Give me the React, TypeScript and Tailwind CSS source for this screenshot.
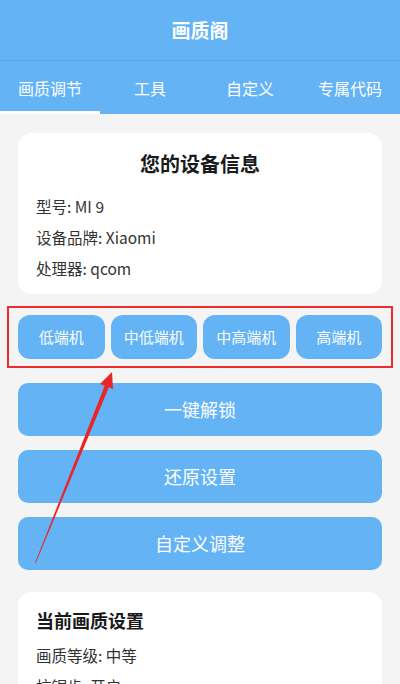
import React from "react";

const tabs = ["画质调节", "工具", "自定义", "专属代码"];
const levels = ["低端机", "中低端机", "中高端机", "高端机"];
const actions = ["一键解锁", "还原设置", "自定义调整"];

function Arrow() {
  // 红色标注箭头，盖在按钮上
  return (
    <svg className="absolute left-0 top-0 pointer-events-none" width="400" height="684" viewBox="0 0 400 684">
      <polygon points="35,563 35.8,563 109,387 105,385" fill="#e8262a" />
      <polygon points="112,372 100,384 113,389" fill="#e8262a" />
    </svg>
  );
}

export default function App() {
  return (
    <div
      className="relative w-[400px] h-[684px] overflow-hidden bg-[#f4f4f4]"
      style={{ fontFamily: '"Noto Sans CJK SC", "Noto Sans", sans-serif' }}
    >
      <div className="h-[61px] bg-[#63b3f5] flex items-center justify-center text-white text-[19px] font-bold border-b border-[#5aa8e8]">
        画质阁
      </div>
      <div className="h-[53px] bg-[#63b3f5] flex">
        {tabs.map((t, i) => (
          <div key={t} className="flex-1 relative flex items-center justify-center text-white text-[16px]">
            {t}
            {i === 0 && <div className="absolute left-0 right-0 bottom-0 h-[3px] bg-white" />}
          </div>
        ))}
      </div>

      <div className="px-[18px] pt-[19px]">
        <div className="bg-white rounded-[13px] h-[161px] px-[18px] pt-[16px]">
          <div className="text-center text-[20px] font-bold text-[#1a1a1a] leading-[30px]">您的设备信息</div>
          <div className="mt-[13px] flex flex-col gap-[3px] text-[15.5px] text-[#333] leading-[28px]">
            <div>型号: MI 9</div>
            <div>设备品牌: Xiaomi</div>
            <div>处理器: qcom</div>
          </div>
        </div>

        <div className="mt-[12px] -mx-[11px] border-2 border-[#ee2c2c] h-[62px] px-[9px] flex items-center gap-[6px]">
          {levels.map((l) => (
            <div key={l} className="flex-1 h-[44px] rounded-[12px] bg-[#63b3f5] flex items-center justify-center text-white text-[15px]">
              {l}
            </div>
          ))}
        </div>

        <div className="mt-[15px] flex flex-col gap-[14px]">
          {actions.map((a) => (
            <div key={a} className="h-[53px] rounded-[10px] bg-[#63b3f5] flex items-center justify-center text-white text-[18px]">
              {a}
            </div>
          ))}
        </div>

        <div className="mt-[22px] bg-white rounded-[13px] h-[120px] px-[18px] pt-[14px]">
          <div className="text-[18px] font-bold text-[#1a1a1a] leading-[28px]">当前画质设置</div>
          <div className="mt-[7px] flex flex-col gap-[3px] text-[15.5px] text-[#333] leading-[28px]">
            <div>画质等级: 中等</div>
            <div>抗锯齿: 开启</div>
          </div>
        </div>
      </div>
      <Arrow />
    </div>
  );
}
